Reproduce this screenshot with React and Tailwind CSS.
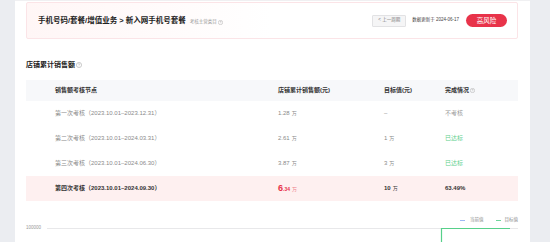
import React from 'react';

const rows = [
    { node: '第一次考核（2023.10.01–2023.12.31）', value: '1.28', target: '–', status: '不考核', tone: 'muted' },
    { node: '第二次考核（2023.10.01–2024.03.31）', value: '2.61', target: '1', status: '已达标', tone: 'ok' },
    { node: '第三次考核（2023.10.01–2024.06.30）', value: '3.87', target: '3', status: '已达标', tone: 'ok' },
];

function Info({ size = 6 }) {
    return (
        <svg width={size} height={size} viewBox="0 0 12 12" className="inline-block ml-[1px]">
            <circle cx="6" cy="6" r="5.2" fill="none" stroke="#9a9a9a" strokeWidth="1" />
            <path d="M4.6 4.7a1.4 1.4 0 1 1 1.9 1.3c-.4.2-.5.4-.5.8" fill="none" stroke="#9a9a9a" strokeWidth="1" />
            <circle cx="6" cy="8.7" r=".55" fill="#9a9a9a" />
        </svg>
    );
}

function Unit({ children, className = '' }) {
    return <span className={`text-[5px] ml-[2px] ${className}`}>{children}</span>;
}

export default function App() {
    return (
        <div className="w-[550px] h-[242px] flex bg-[#ebedf1] overflow-hidden font-['Liberation_Sans','Noto_Sans_CJK_SC',sans-serif]">
            <div className="w-[15px] shrink-0" />

            <main className="w-[515px] shrink-0 bg-white flex flex-col">
                <div className="h-[3px] border-b border-[#f0f0f2]" />

                <div className="pl-[11px] pr-[12px] pt-[1px]">
                    {/* header card */}
                    <div className="h-[37px] flex items-center justify-between pl-[11px] pr-[10px] border border-[#fbe4e7] rounded-[2px] bg-gradient-to-r from-[#fff6f6] via-white to-white">
                        <div className="flex items-baseline">
                            <span className="text-[7.5px] font-bold text-[#222]">手机号码/套餐/增值业务 &gt; 新入网手机号套餐</span>
                            <span className="ml-[4px] text-[4.5px] text-[#999] flex items-center">考核主营类目<Info size={5} /></span>
                        </div>
                        <div className="flex items-center">
                            <button className="px-[5px] h-[12px] bg-[#f5f5f6] border border-[#e2e2e4] rounded-[1px] text-[4.5px] text-[#777] leading-none">
                                &lt; 上一周期
                            </button>
                            <span className="ml-[6px] text-[4.5px] text-[#444]">数据更新于 2024-06-17</span>
                            <span className="ml-[7px] w-[41px] h-[13px] rounded-full bg-[#e8334a] text-white text-[6.5px] flex items-center justify-center">
                                高风险
                            </span>
                        </div>
                    </div>

                    {/* section title */}
                    <div className="mt-[21px] h-[10px] flex items-center text-[7px] font-bold text-[#222]">
                        店铺累计销售额<Info size={6} />
                    </div>

                    {/* table */}
                    <div className="mt-[10px] text-[6px]">
                        <div className="h-[21px] grid grid-cols-[252px_106px_61px_1fr] items-center bg-[#f7f8fa] text-[#333] font-semibold">
                            <span className="pl-[29px]">销售额考核节点</span>
                            <span>店铺累计销售额(元)</span>
                            <span>目标值(元)</span>
                            <span className="flex items-center">完成情况<Info size={5} /></span>
                        </div>
                        {rows.map((r) => (
                            <div key={r.node} className="h-[25px] grid grid-cols-[252px_106px_61px_1fr] items-center text-[#8a8a8a]">
                                <span className="pl-[29px]">{r.node}</span>
                                <span>{r.value}<Unit>万</Unit></span>
                                <span>
                                    {r.target}
                                    {r.target !== '–' && <Unit>万</Unit>}
                                </span>
                                <span className={r.tone === 'ok' ? 'text-[#5ccf8c]' : 'text-[#9a9a9a]'}>{r.status}</span>
                            </div>
                        ))}
                        <div className="h-[25px] grid grid-cols-[252px_106px_61px_1fr] items-center bg-[#fef0f0] text-[#333] font-bold">
                            <span className="pl-[29px]">第四次考核（2023.10.01–2024.09.30）</span>
                            <span className="text-[#e8334a] flex items-baseline">
                                <span className="text-[9px]">6</span>
                                <span className="text-[5px]">.34</span>
                                <Unit className="font-normal text-[#ee7f8c]">万</Unit>
                            </span>
                            <span>10<Unit className="font-normal">万</Unit></span>
                            <span>63.49%</span>
                        </div>
                    </div>

                    {/* chart */}
                    <div className="mt-[16px] flex justify-end items-center text-[4.5px] text-[#888]">
                        <span className="w-[5px] h-[1.5px] bg-[#9db8f5]" />
                        <span className="ml-[5px]">当前值</span>
                        <span className="ml-[12px] w-[5px] h-[1.5px] bg-[#6fd69c]" />
                        <span className="ml-[4px]">目标值</span>
                    </div>
                    <div className="mt-[4px] flex items-start">
                        <span className="w-[21px] text-[4.5px] text-[#999] leading-none mt-[-2px]">100000</span>
                        <svg width="471" height="20" className="block">
                            <line x1="0" y1="0.5" x2="471" y2="0.5" stroke="#e8e8ea" strokeWidth="1" />
                            <path d="M394.5 20 V0.5 H463" fill="none" stroke="#57d08a" strokeWidth="1.2" />
                        </svg>
                    </div>
                </div>
            </main>

            <div className="flex-1" />
        </div>
    );
}
